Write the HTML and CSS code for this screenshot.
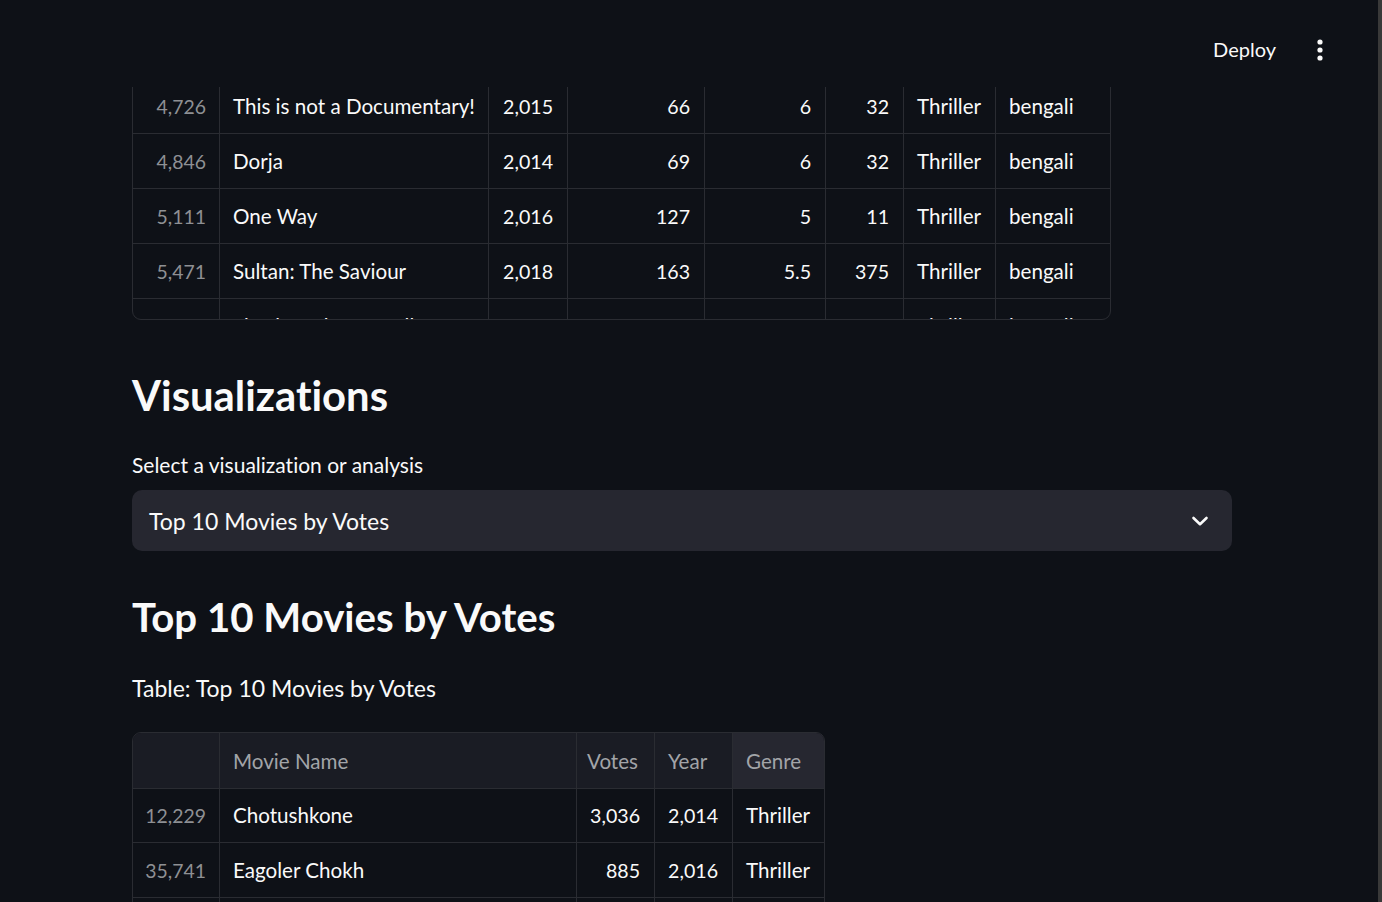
FILE: index.html
```html
<!DOCTYPE html>
<html lang="en">
<head>
<meta charset="utf-8">
<title>Movies Dashboard</title>
<link rel="stylesheet" href="styles.css">
</head>
<body>
<header class="topbar">
  <span class="deploy">Deploy</span>
  <span class="kebab"><svg width="8" height="22" viewBox="0 0 8 22"><circle cx="4" cy="3" r="2.6" fill="#fafafa"/><circle cx="4" cy="11" r="2.6" fill="#fafafa"/><circle cx="4" cy="19" r="2.6" fill="#fafafa"/></svg></span>
</header>
<div class="scrolltrack"></div>
<main class="main">
  <div class="frame frame-top">
    <div class="grid grid-top">
      <div class="c idx">4,512</div><div class="c">Bhalobashar Shohor</div><div class="c num">2,015</div><div class="c num">58</div><div class="c num">6.4</div><div class="c num">21</div><div class="c">Thriller</div><div class="c last">bengali</div>
      <div class="c idx">4,726</div><div class="c">This is not a Documentary!</div><div class="c num">2,015</div><div class="c num">66</div><div class="c num">6</div><div class="c num">32</div><div class="c">Thriller</div><div class="c last">bengali</div>
      <div class="c idx">4,846</div><div class="c">Dorja</div><div class="c num">2,014</div><div class="c num">69</div><div class="c num">6</div><div class="c num">32</div><div class="c">Thriller</div><div class="c last">bengali</div>
      <div class="c idx">5,111</div><div class="c">One Way</div><div class="c num">2,016</div><div class="c num">127</div><div class="c num">5</div><div class="c num">11</div><div class="c">Thriller</div><div class="c last">bengali</div>
      <div class="c idx">5,471</div><div class="c">Sultan: The Saviour</div><div class="c num">2,018</div><div class="c num">163</div><div class="c num">5.5</div><div class="c num">375</div><div class="c">Thriller</div><div class="c last">bengali</div>
      <div class="c idx cut">6,151</div><div class="c cut">Shesh Kotha Ke Bolbe</div><div class="c num cut">2,013</div><div class="c num cut">151</div><div class="c num cut">6</div><div class="c num cut">33</div><div class="c cut">Thriller</div><div class="c last cut">bengali</div>
    </div>
  </div>

  <h2 class="h-vis">Visualizations</h2>
  <label class="sel-label">Select a visualization or analysis</label>
  <div class="select">
    <span class="sel-value">Top 10 Movies by Votes</span>
    <svg class="chev" width="18" height="12" viewBox="0 0 18 12"><path d="M2.5 3 L9 9.2 L15.5 3" fill="none" stroke="#fafafa" stroke-width="2.6" stroke-linecap="round" stroke-linejoin="round"/></svg>
  </div>

  <h2 class="h-top">Top 10 Movies by Votes</h2>
  <p class="caption">Table: Top 10 Movies by Votes</p>

  <div class="frame frame-bottom">
    <div class="grid grid-bottom">
      <div class="c hd"></div><div class="c hd">Movie Name</div><div class="c hd num">Votes</div><div class="c hd">Year</div><div class="c hd hover last">Genre</div>
      <div class="c idx">12,229</div><div class="c">Chotushkone</div><div class="c num">3,036</div><div class="c num">2,014</div><div class="c last">Thriller</div>
      <div class="c idx">35,741</div><div class="c">Eagoler Chokh</div><div class="c num">885</div><div class="c num">2,016</div><div class="c last">Thriller</div>
      <div class="c idx">21,304</div><div class="c">Zulfiqar</div><div class="c num">612</div><div class="c num">2,016</div><div class="c last">Thriller</div>
      <div class="c idx">18,902</div><div class="c">Byomkesh Gotro</div><div class="c num">540</div><div class="c num">2,018</div><div class="c last">Thriller</div>
    </div>
  </div>
</main>
</body>
</html>
```
FILE: styles.css
```css
html, body {
  margin: 0;
  padding: 0;
  height: 902px;
  overflow: hidden;
  background: #0e1117;
  color: #fafafa;
  font-family: "Lato", "Noto Sans", sans-serif;
  font-variant-ligatures: none;
}

.topbar {
  position: fixed;
  top: 0;
  left: 0;
  right: 0;
  height: 87px;
  background: #0e1117;
  z-index: 10;
  display: flex;
  align-items: flex-start;
  justify-content: flex-end;
  padding: 37px 58px 0 0;
  box-sizing: border-box;
  gap: 40px;
}
.deploy {
  font-size: 20px;
  line-height: 24px;
}
.kebab {
  display: flex;
  padding-top: 2px;
}

.scrolltrack {
  position: fixed;
  top: 0;
  right: 0;
  width: 4px;
  height: 902px;
  background: #393939;
  z-index: 11;
}

.main {
  width: 1100px;
  margin-left: 132px;
  padding-top: 23px;
  display: flex;
  flex-direction: column;
  align-items: flex-start;
}

.frame {
  border: 1px solid #2a2c32;
  border-radius: 9px;
  overflow: hidden;
  box-sizing: border-box;
  flex-shrink: 0;
}
.frame-top {
  width: 979px;
  height: 297px;
}
.frame-bottom {
  width: 693px;
  margin-top: 31px;
}

.grid {
  display: grid;
}
.grid-top {
  grid-template-columns: 87px 269px 79px 137px 121px 78px 92px 114px;
  grid-auto-rows: 55px;
}
.grid-bottom {
  grid-template-columns: 87px 357px 78px 78px 91px;
  grid-auto-rows: 55px;
}

.c {
  box-sizing: border-box;
  border-right: 1px solid #2a2c32;
  border-bottom: 1px solid #2a2c32;
  padding: 0 13px;
  font-size: 20.6px;
  display: flex;
  align-items: center;
  white-space: nowrap;
  overflow: hidden;
}
.c.last { border-right: none; }
.c.num { justify-content: flex-end; padding-right: 14px; font-size: 19.6px; }
.c.idx { justify-content: flex-end; color: #8e9094; font-size: 19.4px; }
.c.cut { align-items: flex-start; padding-top: 15px; }
.c.hd {
  background: #1a1c24;
  color: #a2a4a8;
  height: 56px;
  font-size: 20.6px;
}
.c.hd.num { padding-right: 16px; }
.c.hd.hover { background: #262730; }

.h-vis {
  margin: 51px 0 0;
  font-size: 41.8px;
  line-height: 48px;
  font-weight: 700;
}
.sel-label {
  margin-top: 34px;
  font-size: 21px;
  line-height: 24px;
}
.select {
  margin-top: 13px;
  width: 1100px;
  height: 61px;
  background: #262730;
  border-radius: 10px;
  display: flex;
  align-items: center;
  justify-content: space-between;
  padding: 0 23px 0 17px;
  box-sizing: border-box;
  flex-shrink: 0;
}
.sel-value {
  font-size: 23px;
}
.h-top {
  margin: 41px 0 0;
  font-size: 40.2px;
  line-height: 50px;
  font-weight: 700;
}
.caption {
  margin: 33px 0 0;
  font-size: 23px;
  line-height: 26px;
}
```
